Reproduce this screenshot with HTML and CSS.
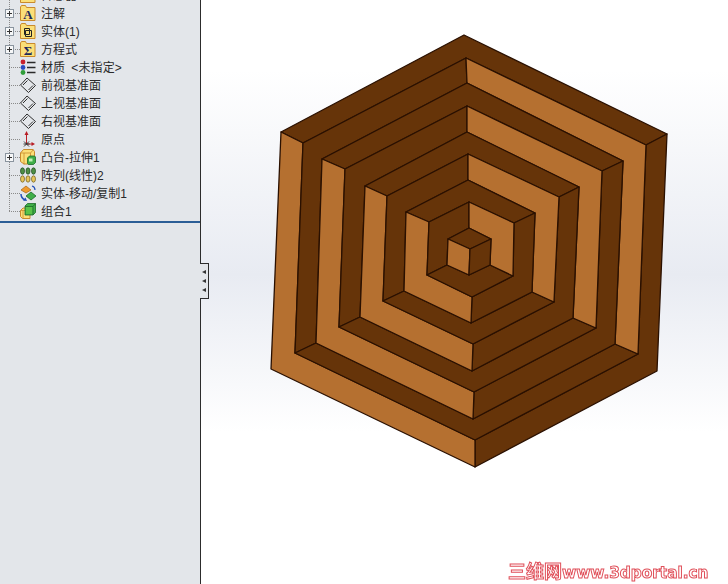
FILE: index.html
```html
<!DOCTYPE html>
<html>
<head>
    <meta charset="UTF-8">
    <title>Feature Tree</title>
    <link rel="stylesheet" href="styles.css">
</head>
<body>
    <aside class="panel">
        <ul class="tree">
            <li class="row">
                <span class="gutter"></span>
                <svg class="icon" viewBox="0 0 16 16"><path class="folder" d="M.5 15.500V2l1-1.500h4l1 2h8.500v13z"/></svg>
                <span class="label">传感器</span>
            </li>
            <li class="row">
                <span class="gutter"><span class="plus"></span></span>
                <svg class="icon" viewBox="0 0 16 16"><path class="folder" d="M.5 15.500V2l1-1.500h4l1 2h8.500v13z"/><text class="glyph" x="8" y="14" text-anchor="middle">A</text></svg>
                <span class="label">注解</span>
            </li>
            <li class="row">
                <span class="gutter"><span class="plus"></span></span>
                <svg class="icon" viewBox="0 0 16 16"><path class="folder" d="M.5 15.500V2l1-1.500h4l1 2h8.500v13z"/><path class="mark" d="M4.500 5.500h5v2h2v6h-6v-2h-1zM5.500 7.500h4v4h-4z"/></svg>
                <span class="label">实体(1)</span>
            </li>
            <li class="row">
                <span class="gutter"><span class="plus"></span></span>
                <svg class="icon" viewBox="0 0 16 16"><path class="folder" d="M.5 15.500V2l1-1.500h4l1 2h8.500v13z"/><text class="glyph" x="8" y="14" text-anchor="middle">Σ</text></svg>
                <span class="label">方程式</span>
            </li>
            <li class="row">
                <span class="gutter"></span>
                <svg class="icon" viewBox="0 0 16 16">
                    <circle cx="3" cy="3" r="2.400" fill="#c8202c"/>
                    <circle cx="3" cy="8.500" r="2.400" fill="#2c4cc0"/>
                    <circle cx="3" cy="13.500" r="2.400" fill="#2f9e3a"/>
                    <path class="bars" d="M7 3.500h8.500M7 8.500h8.500M7 13.500h8.500"/>
                </svg>
                <span class="label">材质 <span class="unset">&lt;未指定&gt;</span></span>
            </li>
            <li class="row">
                <span class="gutter"></span>
                <svg class="icon" viewBox="0 0 16 16"><path class="plane" d="M.5 8L7 1 15.500 8.500 8.500 15.500zM3 8l4.500-4.500M8.500 13l4.500-4.500"/></svg>
                <span class="label">前视基准面</span>
            </li>
            <li class="row">
                <span class="gutter"></span>
                <svg class="icon" viewBox="0 0 16 16"><path class="plane" d="M.5 8L7 1 15.500 8.500 8.500 15.500zM3 8l4.500-4.500M8.500 13l4.500-4.500"/></svg>
                <span class="label">上视基准面</span>
            </li>
            <li class="row">
                <span class="gutter"></span>
                <svg class="icon" viewBox="0 0 16 16"><path class="plane" d="M.5 8L7 1 15.500 8.500 8.500 15.500zM3 8l4.500-4.500M8.500 13l4.500-4.500"/></svg>
                <span class="label">右视基准面</span>
            </li>
            <li class="row">
                <span class="gutter"></span>
                <svg class="icon" viewBox="0 0 16 16">
                    <path class="axis" d="M6.500 13V3M6.500 13H13"/>
                    <path fill="#b81c24" d="M6.500 0l2 4h-4zM15 13l-3.500 2v-4z"/>
                    <path class="bars thin" d="M4 10.500l5 5M9 10.500l-5 5M3.500 13h6"/>
                </svg>
                <span class="label">原点</span>
            </li>
            <li class="row">
                <span class="gutter"><span class="plus"></span></span>
                <svg class="icon" viewBox="0 0 16 16">
                    <path class="folder" d="M.5 4l3-3.500h9.500l1.500 2v8h-5v4.500H4l-3.500-2.500z"/>
                    <path class="cube-line" d="M.5 4h10l3-3.500M4 4v11.500M10.500 4v4"/>
                    <path class="green" d="M7.500 9l2-2h5l1 1v5.500l-2 2h-5l-1-1z"/>
                    <path fill="#c4f0b8" d="M9 9.500h3.500v3H9z"/>
                </svg>
                <span class="label">凸台-拉伸1</span>
            </li>
            <li class="row">
                <span class="gutter"></span>
                <svg class="icon" viewBox="0 0 16 16">
                    <ellipse class="pill-g" cx="2.500" cy="4" rx="2" ry="3.200"/>
                    <ellipse class="pill-g" cx="8" cy="4" rx="2" ry="3.200"/>
                    <ellipse class="pill-g" cx="13.500" cy="4" rx="2" ry="3.200"/>
                    <ellipse class="pill-y" cx="2.500" cy="12" rx="2" ry="3.200"/>
                    <ellipse class="pill-y" cx="8" cy="12" rx="2" ry="3.200"/>
                    <ellipse class="pill-y" cx="13.500" cy="12" rx="2" ry="3.200"/>
                </svg>
                <span class="label">阵列(线性)2</span>
            </li>
            <li class="row">
                <span class="gutter"></span>
                <svg class="icon" viewBox="0 0 16 16">
                    <path fill="#ee9a2e" stroke="#a8620f" stroke-width=".7" d="M1 5l5-4 5 4-5 3z"/>
                    <path class="green" d="M6 11l5-4 5 4-5 4z"/>
                    <path fill="none" stroke="#2450b8" stroke-width="1.500" d="M1 9c0 3 2 5 4 6"/>
                    <path fill="#2450b8" d="M7 16l-4-.5 2.500-3z"/>
                    <path fill="none" stroke="#2450b8" stroke-width="1.200" d="M12 1c2 .5 3 2 3 4"/>
                </svg>
                <span class="label">实体-移动/复制1</span>
            </li>
            <li class="row row-last">
                <span class="gutter"></span>
                <svg class="icon" viewBox="0 0 16 16">
                    <path class="folder" d="M.5 7.500L3 5h7v10.500H2.500L.5 13.500z"/>
                    <path class="cube-line" d="M3 7.500v8M.5 7.500H8"/>
                    <path class="green" d="M5 3L7.500.5h8v9L13 12H5z"/>
                    <path fill="#58c248" d="M6 4h6.500v7H6z"/>
                    <path class="cube-line dark-green" d="M5 3.500h8l2.500-3M13 3.500V12"/>
                </svg>
                <span class="label">组合1</span>
            </li>
        </ul>
        <div class="divider"></div>
    </aside>

    <div class="splitter">
        <span class="arrow"></span>
        <span class="arrow"></span>
        <span class="arrow"></span>
    </div>

    <main class="viewport">
        <svg class="model" viewBox="201 0 527 584">
            <!-- ring 0-1 -->
            <polygon class="dk" points="281,132 464,35 667,134 646,145 466,58 303,143"/>
            <polygon class="dk" points="667,134 657,371 475,467 475,440 638,354 646,145"/>
            <polygon class="lt" points="281,132 303,143 295,353 475,440 475,467 271,369"/>
            <!-- ring 1-2 -->
            <polygon class="dk" points="303,143 466,58 467,83 322,159 316,343 295,353"/>
            <polygon class="dk" points="295,353 475,440 638,354 615,344 473,419 316,343"/>
            <polygon class="lt" points="466,58 646,145 638,354 615,344 623,161 467,83"/>
            <!-- ring 2-3 -->
            <polygon class="dk" points="322,159 467,83 623,161 602,171 467,106 345,169"/>
            <polygon class="dk" points="623,161 615,344 473,419 474,392 596,328 602,171"/>
            <polygon class="lt" points="322,159 345,169 339,327 474,392 473,419 316,343"/>
            <!-- ring 3-4 -->
            <polygon class="dk" points="345,169 467,106 467,132 365,186 360,317 339,327"/>
            <polygon class="dk" points="339,327 474,392 596,328 573,318 472,371 360,317"/>
            <polygon class="lt" points="467,106 602,171 596,328 573,318 579,187 467,132"/>
            <!-- ring 4-5 -->
            <polygon class="dk" points="365,186 467,132 579,187 559,197 468,154 387,196"/>
            <polygon class="dk" points="579,187 573,318 472,371 473,344 554,302 559,197"/>
            <polygon class="lt" points="365,186 387,196 383,301 473,344 472,371 360,317"/>
            <!-- ring 5-6 -->
            <polygon class="dk" points="387,196 468,154 468,180 406,212 404,291 383,301"/>
            <polygon class="dk" points="383,301 473,344 554,302 532,292 471,323 404,291"/>
            <polygon class="lt" points="468,154 559,197 554,302 532,292 535,213 468,180"/>
            <!-- ring 6-7 -->
            <polygon class="dk" points="406,212 468,180 535,213 514,223 469,202 429,222"/>
            <polygon class="dk" points="535,213 532,292 471,323 472,297 513,276 514,223"/>
            <polygon class="lt" points="406,212 429,222 427,275 472,297 471,323 404,291"/>
            <!-- ring 7-8 -->
            <polygon class="dk" points="429,222 469,202 469,228 448,239 447,265 427,275"/>
            <polygon class="dk" points="427,275 472,297 513,276 490,265 469,275 447,265"/>
            <polygon class="lt" points="469,202 514,223 513,276 490,265 491,239 469,228"/>
            <!-- centre block -->
            <polygon class="dk" points="448,239 469,228 491,239 470,249"/>
            <polygon class="lt" points="448,239 470,249 469,275 447,265"/>
            <polygon class="dk" points="491,239 490,265 469,275 470,249"/>
        </svg>
        <div class="watermark"><span class="wm-cn">三维网</span>www.3dportal.cn</div>
    </main>
</body>
</html>
```

FILE: styles.css
```css
html, body
{
    margin: 0;
    height: 100%;
    overflow: hidden;
}

body
{
    display: flex;
    position: relative;
    width: 728px;
    height: 584px;
    font-family: "Liberation Sans", "Noto Sans CJK SC", sans-serif;
    font-size: 12px;
    color: #2a2a2a;
}

.panel
{
    flex: 0 0 200px;
    overflow: hidden;
    background: #e3e6ea;
    border-right: 1px solid #2c2c2c;
}

.tree
{
    list-style: none;
    margin: -14px 0 0;
    padding: 0;
}

.row
{
    display: flex;
    align-items: center;
    height: 18px;
}

.gutter
{
    display: flex;
    align-items: center;
    flex: 0 0 20px;
    height: 18px;
    background-image:
        repeating-linear-gradient(to bottom, #8a8a8a 0 1px, transparent 1px 2px),
        repeating-linear-gradient(to right, #8a8a8a 0 1px, transparent 1px 2px);
    background-size: 1px 100%, 11px 1px;
    background-position: 9px 0, 9px 9px;
    background-repeat: no-repeat;
}

.row-last .gutter
{
    background-size: 1px 50%, 11px 1px;
}

.plus
{
    box-sizing: border-box;
    width: 9px;
    height: 9px;
    margin: 1px 0 0 5px;
    border: 1px solid #8a949e;
    background:
        linear-gradient(#333, #333) center / 5px 1px no-repeat,
        linear-gradient(#333, #333) center / 1px 5px no-repeat,
        #f6f7f8;
}

.icon
{
    flex: 0 0 16px;
    width: 16px;
    height: 16px;
    margin-right: 5px;
}

.label
{
    padding-top: 2px;
    white-space: nowrap;
    line-height: 18px;
}

.unset
{
    margin-left: 3px;
    letter-spacing: .1px;
}

.folder
{
    fill: #fbdf78;
    stroke: #c98a2c;
    stroke-width: 1;
}

.glyph
{
    font-family: "Liberation Serif", serif;
    font-weight: bold;
    font-size: 13px;
    fill: #1c2a5c;
}

.mark
{
    fill: none;
    stroke: #222;
    stroke-width: 1;
}

.bars
{
    fill: none;
    stroke: #2a2a2a;
    stroke-width: 1.700;
}

.bars.thin
{
    stroke-width: .9;
}

.plane
{
    fill: none;
    stroke: #2e2e2e;
    stroke-width: 1;
}

.axis
{
    fill: none;
    stroke: #b81c24;
    stroke-width: 1;
}

.green
{
    fill: #3fae48;
    stroke: #1d6a28;
    stroke-width: .8;
}

.cube-line
{
    fill: none;
    stroke: #c98a2c;
    stroke-width: .8;
}

.dark-green
{
    stroke: #1d6a28;
}

.pill-g
{
    fill: #4f8f45;
    stroke: #1e4a20;
    stroke-width: .7;
}

.pill-y
{
    fill: #e8c65a;
    stroke: #6a5a20;
    stroke-width: .7;
}

.divider
{
    height: 2px;
    margin-top: 1px;
    background: #2b5e96;
}

.splitter
{
    position: absolute;
    left: 200px;
    top: 263px;
    z-index: 2;
    box-sizing: border-box;
    display: flex;
    flex-direction: column;
    align-items: center;
    justify-content: center;
    gap: 5px;
    width: 9px;
    height: 36px;
    background: #e3e6ea;
    border: 1px solid #2c2c2c;
    border-left: 0;
}

.arrow
{
    width: 0;
    height: 0;
    border-top: 2.500px solid transparent;
    border-bottom: 2.500px solid transparent;
    border-right: 4px solid #333;
}

.viewport
{
    flex: 1;
    position: relative;
    overflow: hidden;
    background: linear-gradient(to bottom, #fff 0, #fff 12%, #e8ebf2 47%, #fff 74%);
}

.model
{
    display: block;
    width: 527px;
    height: 584px;
}

.dk
{
    fill: #663409;
    stroke: #2a1000;
    stroke-width: 1.300;
    stroke-linejoin: round;
}

.lt
{
    fill: #b57030;
    stroke: #2a1000;
    stroke-width: 1.300;
    stroke-linejoin: round;
}

.watermark
{
    position: absolute;
    left: 307px;
    top: 560px;
    font-family: "DejaVu Sans", sans-serif;
    font-weight: bold;
    font-size: 15.300px;
    line-height: 20px;
    white-space: nowrap;
    color: #fff;
    -webkit-text-stroke: 1px #e0505a;
    filter: blur(.4px);
}

.wm-cn
{
    font-family: "Noto Sans CJK SC", sans-serif;
    font-size: 18px;
}
```
